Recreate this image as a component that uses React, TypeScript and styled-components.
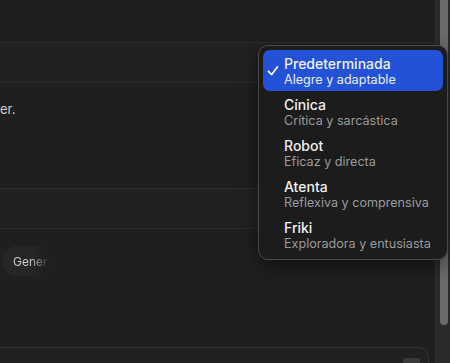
import styled, { createGlobalStyle } from 'styled-components'

const personalities = [
  { name: 'Predeterminada', description: 'Alegre y adaptable' },
  { name: 'Cínica', description: 'Crítica y sarcástica' },
  { name: 'Robot', description: 'Eficaz y directa' },
  { name: 'Atenta', description: 'Reflexiva y comprensiva' },
  { name: 'Friki', description: 'Exploradora y entusiasta' },
]

const App = () => {
  const selected = 'Predeterminada'

  return (
    <>
      <GlobalStyle />
      <StyledWindow>
        <StyledContent>
          <StyledTopSpace />
          <StyledBand />
          <StyledTextSection>
            <StyledParagraph>er.</StyledParagraph>
          </StyledTextSection>
          <StyledBand />
          <StyledActions>
            <StyledGhostButton>Generar</StyledGhostButton>
          </StyledActions>
          <StyledComposer>
            <StyledComposerKnob />
          </StyledComposer>
        </StyledContent>

        <StyledScrollTrack>
          <StyledScrollThumb />
        </StyledScrollTrack>

        <StyledMenu>
          {personalities.map((item) => (
            <StyledMenuItem key={item.name} $active={item.name === selected}>
              {item.name === selected && (
                <StyledCheck viewBox="0 0 12 12">
                  <path
                    d="M1.5 6.4 L4.6 9.6 L10.6 1.8"
                    fill="none"
                    stroke="currentColor"
                    strokeWidth="1.7"
                    strokeLinecap="round"
                    strokeLinejoin="round"
                  />
                </StyledCheck>
              )}
              <StyledItemTitle>{item.name}</StyledItemTitle>
              <StyledItemDescription $active={item.name === selected}>
                {item.description}
              </StyledItemDescription>
            </StyledMenuItem>
          ))}
        </StyledMenu>
      </StyledWindow>
    </>
  )
}

export default App

const GlobalStyle = createGlobalStyle`
  html, body {
    margin: 0;
    padding: 0;
    background: #1f1f1f;
    font-family: Inter, "Noto Sans", sans-serif;
    -webkit-font-smoothing: antialiased;
  }
`

const StyledWindow = styled.div`
  position: relative;
  display: flex;
  width: 450px;
  height: 363px;
  overflow: hidden;
  background: #1f1f1f;
`

const StyledContent = styled.div`
  flex: 1;
  display: flex;
  flex-direction: column;
  min-width: 0;
`

const StyledTopSpace = styled.div`
  height: 42px;
  flex-shrink: 0;
`

const StyledBand = styled.div`
  height: 41px;
  flex-shrink: 0;
  box-sizing: border-box;
  background: #212121;
  border-top: 1px solid #2c2c2c;
  border-bottom: 1px solid #2c2c2c;
`

const StyledTextSection = styled.div`
  height: 105px;
  flex-shrink: 0;
  padding-top: 17px;
  box-sizing: border-box;
`

const StyledParagraph = styled.p`
  margin: 0;
  font-size: 13px;
  line-height: 18px;
  color: #cfcfcf;
`

const StyledActions = styled.div`
  height: 118px;
  flex-shrink: 0;
  padding-top: 17px;
  box-sizing: border-box;
`

const StyledGhostButton = styled.button`
  height: 30px;
  width: 60px;
  margin-left: 2px;
  padding: 0 0 0 11px;
  border: none;
  border-radius: 15px;
  background: #262626;
  color: #cdcdcd;
  font-family: inherit;
  font-size: 12px;
  text-align: left;
  white-space: nowrap;
  overflow: hidden;
  -webkit-mask-image: linear-gradient(to right, #000 0, #000 28px, transparent 48px);
  mask-image: linear-gradient(to right, #000 0, #000 28px, transparent 48px);
`

const StyledComposer = styled.div`
  flex: 1;
  position: relative;
  margin-left: -12px;
  margin-right: 6px;
  border: 1px solid #333333;
  border-bottom: none;
  border-radius: 10px 10px 0 0;
  background: #212121;
  display: flex;
  justify-content: flex-end;
  padding: 10px 8px 0 0;
`

const StyledComposerKnob = styled.div`
  width: 17px;
  height: 10px;
  background: #3a3a3a;
  border-radius: 2px 2px 0 0;
`

const StyledScrollTrack = styled.div`
  width: 15px;
  background: #2a2a2a;
  border-left: 1px solid #2f2f2f;
  box-sizing: border-box;
  padding: 0 2px 0 4px;
`

const StyledScrollThumb = styled.div`
  height: 325px;
  background: #6b6b6b;
  border-radius: 0 0 5px 5px;
`

const StyledMenu = styled.div`
  position: absolute;
  left: 258px;
  top: 45px;
  width: 190px;
  box-sizing: border-box;
  padding: 4px;
  background: #1c1c1c;
  border: 1px solid #4a4a4a;
  border-radius: 10px;
  box-shadow: 0 6px 20px rgba(0, 0, 0, 0.45);
  display: flex;
  flex-direction: column;
`

const StyledMenuItem = styled.div<{ $active: boolean }>`
  position: relative;
  height: 41px;
  box-sizing: border-box;
  padding: 5px 0 0 21px;
  border-radius: 7px;
  background: ${(p) => (p.$active ? '#2352d6' : 'transparent')};
  color: #ffffff;
`

const StyledCheck = styled.svg`
  position: absolute;
  left: 4px;
  top: 15px;
  width: 12px;
  height: 12px;
  color: #ffffff;
`

const StyledItemTitle = styled.div`
  font-size: 14px;
  font-weight: 500;
  line-height: 17px;
  color: #f0f0f0;
`

const StyledItemDescription = styled.div<{ $active: boolean }>`
  font-size: 12.6px;
  line-height: 15px;
  color: ${(p) => (p.$active ? '#e6ebfb' : '#9b9b9b')};
`
